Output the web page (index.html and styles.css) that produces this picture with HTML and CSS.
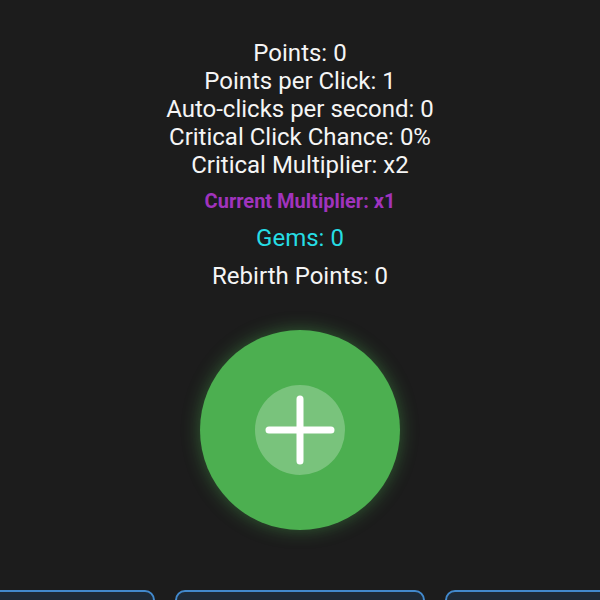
FILE: index.html
```html
<!DOCTYPE html>
<html>
<head>
<meta charset="utf-8">
<link rel="stylesheet" href="styles.css">
</head>
<body>
<main class="game">
  <section class="stats">
    <div class="stat">Points: 0</div>
    <div class="stat">Points per Click: 1</div>
    <div class="stat">Auto-clicks per second: 0</div>
    <div class="stat">Critical Click Chance: 0%</div>
    <div class="stat">Critical Multiplier: x2</div>
  </section>
  <div class="multiplier">Current Multiplier: x1</div>
  <div class="gems">Gems: 0</div>
  <div class="rebirth">Rebirth Points: 0</div>
  <button class="clicker" aria-label="Click">
    <span class="clicker-inner">
      <svg width="70" height="70" viewBox="0 0 70 70">
        <path d="M35 4 V66 M4 35 H66" stroke="#fff" stroke-width="7" stroke-linecap="round" fill="none"/>
      </svg>
    </span>
  </button>
  <div class="panels">
    <div class="panel"></div>
    <div class="panel"></div>
    <div class="panel"></div>
  </div>
</main>
</body>
</html>
```
FILE: styles.css
```css
html, body {
  margin: 0;
  padding: 0;
  background: #1c1c1c;
  height: 100%;
  overflow: hidden;
}
body {
  font-family: Roboto, "Liberation Sans", sans-serif;
  color: #f5f5f5;
}
.game {
  display: flex;
  flex-direction: column;
  align-items: center;
  padding-top: 39px;
}
.stats {
  text-align: center;
}
.stat {
  font-size: 24px;
  line-height: 28px;
}
.multiplier {
  margin-top: 10px;
  font-size: 20px;
  line-height: 24px;
  font-weight: bold;
  color: #a033bd;
}
.gems {
  margin-top: 11px;
  font-size: 24px;
  line-height: 28px;
  color: #26dde4;
}
.rebirth {
  margin-top: 10px;
  font-size: 24px;
  line-height: 28px;
}
.clicker {
  margin-top: 40px;
  width: 200px;
  height: 200px;
  border-radius: 50%;
  border: none;
  padding: 0;
  background: #4caf50;
  box-shadow: 0 0 18px rgba(76, 175, 80, 0.45);
  display: flex;
  align-items: center;
  justify-content: center;
  cursor: pointer;
}
.clicker-inner {
  width: 90px;
  height: 90px;
  border-radius: 50%;
  background: rgba(255, 255, 255, 0.25);
  display: flex;
  align-items: center;
  justify-content: center;
}
.panels {
  margin-top: 60px;
  width: 100%;
  display: flex;
  justify-content: center;
  gap: 20px;
}
.panel {
  flex: 0 0 250px;
  height: 80px;
  box-sizing: border-box;
  border: 2px solid #4289cc;
  border-radius: 10px;
  background: #1e2a36;
}
```
